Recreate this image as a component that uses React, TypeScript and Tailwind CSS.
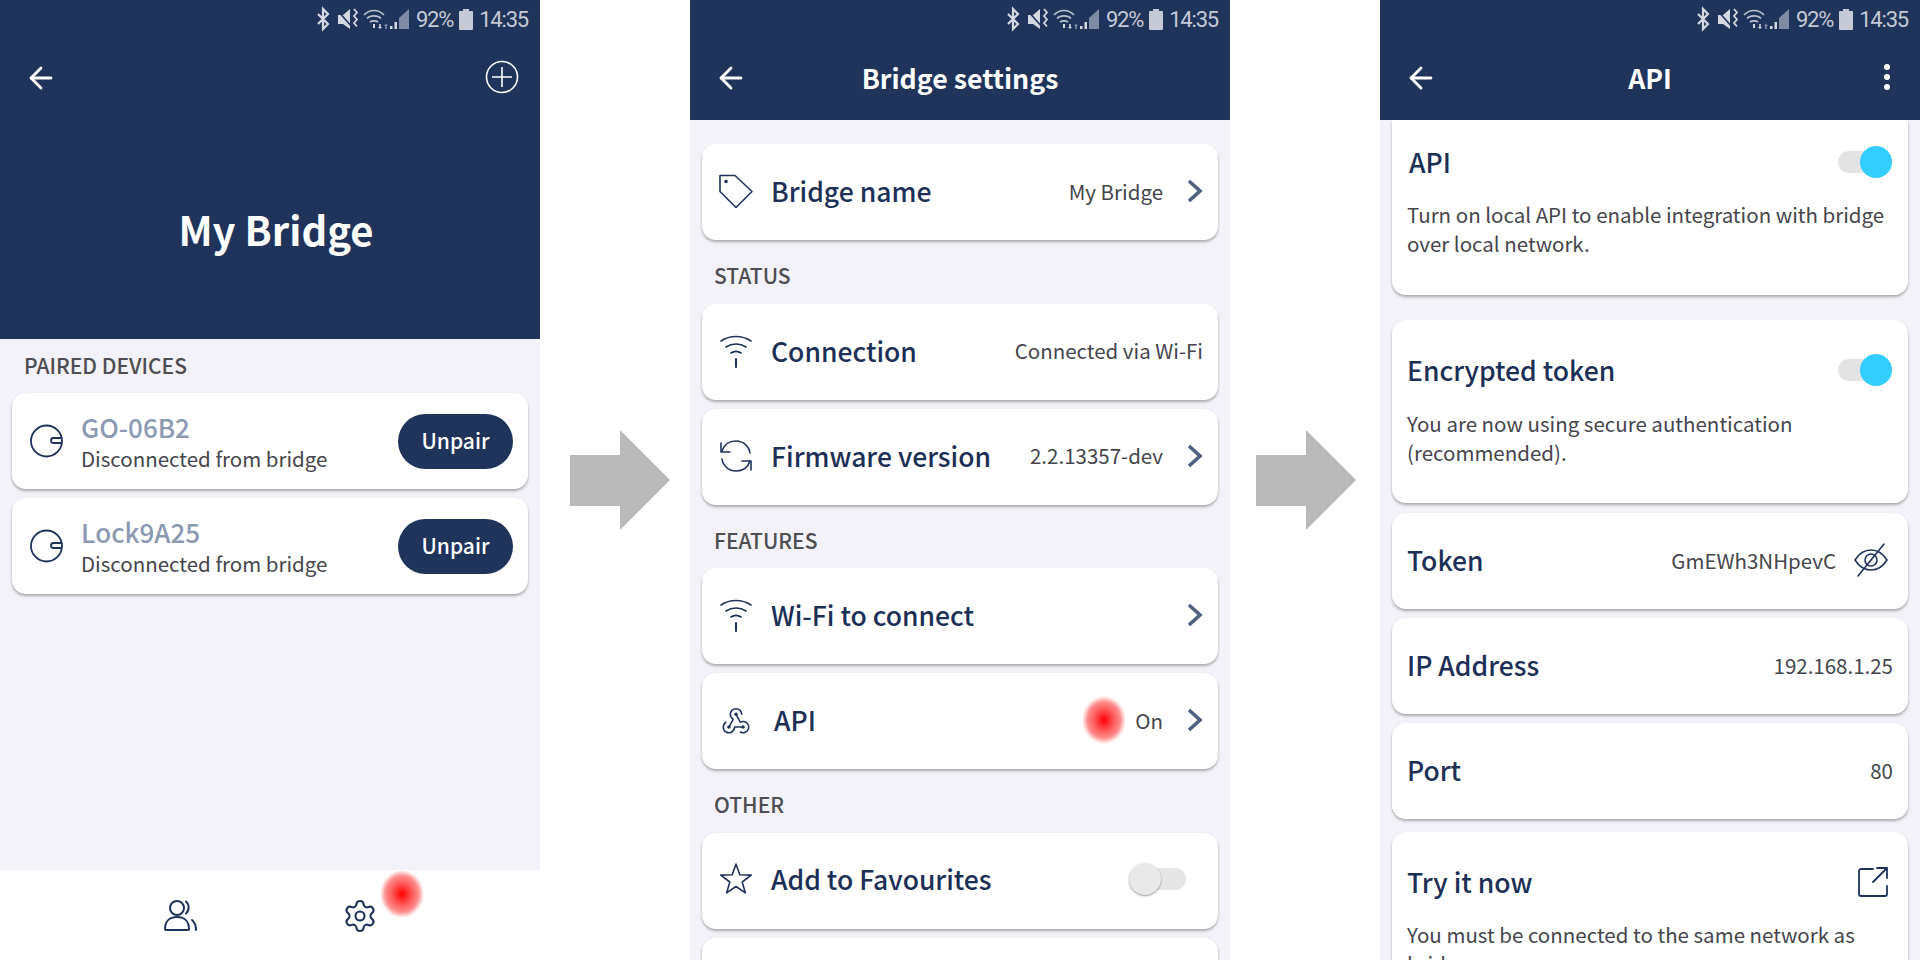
import { ArrowLeft, Settings } from 'lucide-react';

const FONT = "font-['Noto_Sans_CJK_JP','Noto_Sans',sans-serif]";
const NAVY = '#1f325a';

function StatusBar() {
  return (
    <div className="h-[38px] mb-[2px] shrink-0 flex items-center justify-end pr-3 gap-[5px] font-['Roboto',sans-serif] text-[22px] tracking-[-1.200px] text-[#c6cad6]">
      <svg width="94" height="26" viewBox="0 0 94 26" fill="none">
        {/* bluetooth */}
        <path d="M1 8l10 10-5 5V3l5 5L1 18" stroke="#d5d8e1" strokeWidth="2.200" />
        {/* muted speaker + vibrate */}
        <path d="M21 9h5l7-6v20l-7-5h-5z" fill="#d5d8e1" />
        <path d="M20 4l16 18" stroke="#20335b" strokeWidth="1.600" />
        <path d="M37 3l3 3.500-3 3.500 3 3.500-3 3.500 3 3.500" stroke="#d5d8e1" strokeWidth="1.800" />
        {/* wifi */}
        <path d="M47 9c5.500-6 14.500-6 20 0M50 12.500c3.500-3.500 10.500-3.500 14 0M53 16c2-1.500 6-1.500 8 0" stroke="#bcc1cf" strokeWidth="1.700" />
        <path d="M56 18h2v4h-2z" fill="#d5d8e1" />
        <path d="M61 21l2 2 2-2h-1.200v-3h-1.600v3z" fill="#d5d8e1" />
        <path d="M67 20l2-2.500 2 2.500h-1.200v3h-1.600v-3z" fill="#7f8ba5" />
        {/* signal */}
        <path d="M73 23h2.500v-3H73zM77.500 23H80v-7h-2.500z" fill="#d5d8e1" />
        <path d="M82 23V12l10-9v20z" fill="#7f8ba5" />
      </svg>
      <span>92%</span>
      <svg width="14" height="23" viewBox="0 0 14 23" className="mx-[1px]">
        <path d="M4 1h6v2h3a1 1 0 0 1 1 1v17a1 1 0 0 1-1 1H1a1 1 0 0 1-1-1V4a1 1 0 0 1 1-1h3z" fill="#c6cad6" />
      </svg>
      <span>14:35</span>
    </div>
  );
}

function NavBar({ title, right }: { title?: string; right?: React.ReactNode }) {
  return (
    <div className="relative h-[74px] shrink-0 flex items-center justify-center">
      <ArrowLeft size={34} strokeWidth={2} className="absolute left-[24px] top-[21px] text-white" />
      {title && <div className="mt-[2px] text-[26.700px] font-bold text-white leading-none">{title}</div>}
      {right}
    </div>
  );
}

function Card({ children, className = '' }: { children?: React.ReactNode; className?: string }) {
  return (
    <div className={`bg-white rounded-[14px] shadow-[0_2px_3px_rgba(0,0,0,0.3)] ${className}`}>{children}</div>
  );
}

function SectionLabel({ text }: { text: string }) {
  return <div className="h-[26px] mt-[22px] mb-[15.500px] pl-[12px] text-[21px] leading-[26px] font-medium text-[#4d4d52]">{text}</div>;
}

function Icon({ children }: { children: React.ReactNode }) {
  return (
    <svg width="34" height="34" viewBox="0 0 34 34" fill="none" stroke={NAVY} strokeWidth="1.600" strokeLinecap="round" strokeLinejoin="round">
      {children}
    </svg>
  );
}

function WifiIcon() {
  return (
    <Icon>
      <path d="M2 7c9-6 21-6 30 0" />
      <path d="M7 13c6-4 14-4 20 0" />
      <path d="M12 19c3-2 7-2 10 0" />
      <path d="M17 25v8" strokeWidth="2" />
    </Icon>
  );
}

function SyncIcon() {
  return (
    <Icon>
      <path d="M3 12C5 6 10 2 17 2c7 0 13 5 14 12" />
      <path d="M31 22c-2 6-7 10-14 10-7 0-13-5-14-12" />
      <path d="M2 4v9h9" />
      <path d="M32 31v-9h-9" />
    </Icon>
  );
}

function TagIcon() {
  return (
    <Icon>
      <path d="M1 1.500H16L33 17.500 17 33.500 1 17.500z" />
      <circle cx="7" cy="7.500" r="1" fill={NAVY} />
    </Icon>
  );
}

function WebhookIcon() {
  return (
    <svg width="36" height="36" viewBox="0 0 24 24" fill="none" stroke={NAVY} strokeWidth="1.100" strokeLinecap="round" strokeLinejoin="round">
      <path d="M4.876 13.610a4 4 0 1 0 6.124 3.390h6" />
      <path d="M15.066 20.502a4 4 0 1 0 1.934-7.502c-.706 0-1.424.179-2 .500l-3-5.500" />
      <path d="M16 8a4 4 0 1 0-8 0c0 1.506.770 2.818 2 3.500l-3 5.500" />
      <circle cx="12" cy="8" r=".700" fill={NAVY} />
      <circle cx="7" cy="17" r=".700" fill={NAVY} />
      <circle cx="17" cy="17" r=".700" fill={NAVY} />
    </svg>
  );
}

function StarIcon() {
  return (
    <Icon>
      <polygon points="17,2 20.800,12.700 32.200,13.100 23.200,20 26.400,30.900 17,24.500 7.600,30.900 10.800,20 1.800,13.100 13.200,12.700" />
    </Icon>
  );
}

function EyeOffIcon() {
  return (
    <Icon>
      <path d="M1 17C6 9 11 7 17 7s11 2 16 10c-5 8-10 10-16 10S6 25 1 17z" />
      <circle cx="17" cy="17" r="6" />
      <path d="M30 1L4 33" />
    </Icon>
  );
}

function DeviceIcon() {
  return (
    <svg width="33" height="34" viewBox="0 0 33 34" fill="none" stroke={NAVY} strokeWidth="1.800">
      <circle cx="16.500" cy="17" r="15.500" />
      <path d="M32 14h-8.500a2.500 2.500 0 0 0 0 5H32" />
    </svg>
  );
}

function UsersIcon() {
  return (
    <svg width="34" height="34" viewBox="0 0 34 34" fill="none" stroke={NAVY} strokeWidth="2" strokeLinecap="round">
      <circle cx="14" cy="9" r="7" />
      <path d="M23 2.500c3.500 3 3.500 9 0 12" />
      <path d="M2 30c0-7 4-12 12-12s12 5 12 12c0 1-1 1-2 1H4c-1 0-2 0-2-1z" />
      <path d="M29 21c3 2.500 4 6 4 10" />
    </svg>
  );
}

function ExternalIcon() {
  return (
    <svg width="30" height="30" viewBox="0 0 30 30" fill="none" stroke={NAVY} strokeWidth="1.800" strokeLinecap="round" strokeLinejoin="round">
      <path d="M15 2H3a2 2 0 0 0-2 2v23a2 2 0 0 0 2 2h24a2 2 0 0 0 2-2V19" />
      <path d="M15 15L29 1M19 1h10v10" />
    </svg>
  );
}

function Chevron() {
  return (
    <svg width="17" height="24" viewBox="0 0 17 24" fill="none" stroke="#4e5f80" strokeWidth="3.600" className="ml-[23px]">
      <path d="M3 2l11 10L3 22" />
    </svg>
  );
}

function Row({ icon, label, value, chevron, labelClass = 'ml-[18px]' }: { icon: React.ReactNode; label: string; value?: string; chevron?: boolean; labelClass?: string }) {
  return (
    <Card className="h-24 pb-[2px] flex items-center pl-[17px] pr-[15px]">
      <div className="w-[34px] h-[34px] flex items-center justify-center shrink-0">{icon}</div>
      <div className={`text-[26.500px] font-medium text-[#1c2f56] ${labelClass}`}>{label}</div>
      <div className="ml-auto flex items-center">
        {value && <span className="text-[20.500px] text-[#45454c]">{value}</span>}
        {chevron && <Chevron />}
      </div>
    </Card>
  );
}

function DeviceCard({ name }: { name: string }) {
  return (
    <Card className="h-24 flex items-center pl-[18px] pr-[15px]">
      <DeviceIcon />
      <div className="ml-[18px]">
        <div className="text-[26px] leading-[34px] font-medium text-[#8c99b3]">{name}</div>
        <div className="text-[20.500px] leading-[28px] text-[#45454c]">Disconnected from bridge</div>
      </div>
      <div className="ml-auto w-[115px] h-[55px] rounded-full bg-[#20335b] text-white text-[21px] font-medium flex items-center justify-center">Unpair</div>
    </Card>
  );
}

function Toggle({ on }: { on?: boolean }) {
  if (on) {
    return (
      <div className="relative w-[54px] h-[22px] rounded-full bg-[#e3e3e3] mr-[1px]">
        <div className="absolute -top-[5px] right-0 w-[32px] h-[32px] rounded-full bg-[#33ccff]" />
      </div>
    );
  }
  return (
    <div className="relative w-[57px] h-[22px] rounded-full bg-[#e6e6e6]">
      <div className="absolute -top-[5px] left-0 w-[32px] h-[32px] rounded-full bg-[#e9e9e9] shadow-[0_1px_2px_rgba(0,0,0,0.4)]" />
    </div>
  );
}

function Arrow({ className }: { className: string }) {
  return (
    <div className={`w-[150px] shrink-0 flex items-center ${className}`}>
      <svg width="100" height="100" viewBox="0 0 100 100">
        <path d="M0 25h50V0l50 50-50 50V76H0z" fill="#b9b9b9" />
      </svg>
    </div>
  );
}

function Hotspot({ className }: { className: string }) {
  return (
    <div className={`absolute w-[44px] h-[48px] bg-[radial-gradient(closest-side,#ff0000_0%,rgba(255,0,0,0.65)_45%,rgba(255,0,0,0.45)_75%,rgba(255,0,0,0)_100%)] ${className}`} />
  );
}

export default function App() {
  return (
    <div className={`relative w-[1920px] h-[960px] overflow-hidden bg-white flex ${FONT}`}>
      {/* Paired devices */}
      <div className="w-[540px] shrink-0 flex flex-col bg-[#f2f2f8]">
        <div className="h-[339px] shrink-0 bg-[#20335b] flex flex-col">
          <StatusBar />
          <NavBar
            right={
              <svg width="34" height="34" viewBox="0 0 34 34" fill="none" stroke="white" strokeWidth="1.600" className="absolute right-[21px]">
                <circle cx="17" cy="17" r="15.500" />
                <path d="M17 7v20M7 17h20" />
              </svg>
            }
          />
          <div className="flex-1 flex items-center justify-center pt-1 pl-[12px] text-[40px] font-bold text-white">My Bridge</div>
        </div>
        <div className="flex-1 px-3">
          <div className="h-[26px] mt-[13px] mb-[15px] pl-[12px] text-[21px] leading-[26px] font-medium text-[#4d4d52]">PAIRED DEVICES</div>
          <div className="flex flex-col gap-[9px]">
            <DeviceCard name="GO-06B2" />
            <DeviceCard name="Lock9A25" />
          </div>
        </div>
        <div className="h-[90px] shrink-0 bg-white flex justify-center items-center pt-[2px]">
          <div className="w-[180px] flex justify-center"><UsersIcon /></div>
          <div className="w-[180px] flex justify-center"><Settings size={36} strokeWidth={1.4} className="text-[#1f325a]" /></div>
        </div>
      </div>

      <Arrow className="pl-[30px]" />

      {/* Bridge settings */}
      <div className="w-[540px] shrink-0 flex flex-col bg-[#f2f2f8]">
        <div className="h-[120px] shrink-0 bg-[#20335b] flex flex-col">
          <StatusBar />
          <NavBar title="Bridge settings" />
        </div>
        <div className="flex-1 px-3 pt-[24px]">
          <Row icon={<TagIcon />} label="Bridge name" value="My Bridge" chevron />
          <SectionLabel text="STATUS" />
          <div className="flex flex-col gap-[9px]">
            <Row icon={<WifiIcon />} label="Connection" value="Connected via Wi-Fi" />
            <Row icon={<SyncIcon />} label="Firmware version" value="2.2.13357-dev" chevron />
          </div>
          <SectionLabel text="FEATURES" />
          <div className="flex flex-col gap-[9px]">
            <Row icon={<WifiIcon />} label="Wi-Fi to connect" chevron />
            <Row icon={<WebhookIcon />} label="API" value="On" chevron labelClass="ml-[21px]" />
          </div>
          <SectionLabel text="OTHER" />
          <div className="flex flex-col gap-[9px]">
            <Card className="h-24 pb-[4px] flex items-center pl-[17px] pr-[32px]">
              <StarIcon />
              <div className="ml-[18px] text-[26.500px] font-medium text-[#1c2f56]">Add to Favourites</div>
              <div className="ml-auto"><Toggle /></div>
            </Card>
            <Card className="h-24" />
          </div>
        </div>
      </div>

      <Arrow className="pl-[26px]" />

      {/* API */}
      <div className="w-[540px] shrink-0 flex flex-col bg-[#f2f2f8]">
        <div className="relative z-10 h-[120px] shrink-0 bg-[#20335b] flex flex-col">
          <StatusBar />
          <NavBar
            title="API"
            right={
              <div className="absolute right-[30px] flex flex-col gap-[4px]">
                <div className="w-[6px] h-[6px] rounded-full bg-white" />
                <div className="w-[6px] h-[6px] rounded-full bg-white" />
                <div className="w-[6px] h-[6px] rounded-full bg-white" />
              </div>
            }
          />
        </div>
        <div className="flex-1 px-3 min-h-0">
          <Card className="h-[175px] rounded-t-none px-[15px] pt-[24px]">
            <div className="flex items-center justify-between h-9">
              <div className="text-[26.500px] font-medium text-[#1c2f56] pl-[2px]">API</div>
              <Toggle on />
            </div>
            <div className="mt-[20px] text-[20.500px] leading-[29px] text-[#45454c]">Turn on local API to enable integration with bridge over local network.</div>
          </Card>
          <Card className="mt-[25px] h-[183px] px-[15px] pt-[32px]">
            <div className="flex items-center justify-between h-9">
              <div className="text-[26.500px] font-medium text-[#1c2f56]">Encrypted token</div>
              <Toggle on />
            </div>
            <div className="mt-[21px] text-[20.500px] leading-[29px] text-[#45454c]">You are now using secure authentication (recommended).</div>
          </Card>
          <div className="mt-[10px] flex flex-col gap-[9px]">
            <Card className="h-24 pb-[2px] flex items-center pl-[15px] pr-[20px]">
              <div className="text-[26.500px] font-medium text-[#1c2f56]">Token</div>
              <span className="ml-auto text-[20.500px] text-[#45454c]">GmEWh3NHpevC</span>
              <div className="ml-[18px]"><EyeOffIcon /></div>
            </Card>
            <Card className="h-24 pb-[2px] flex items-center justify-between px-[15px]">
              <div className="text-[26.500px] font-medium text-[#1c2f56]">IP Address</div>
              <span className="text-[20.500px] text-[#45454c]">192.168.1.25</span>
            </Card>
            <Card className="h-24 pb-[2px] flex items-center justify-between px-[15px]">
              <div className="text-[26.500px] font-medium text-[#1c2f56]">Port</div>
              <span className="text-[20.500px] text-[#45454c]">80</span>
            </Card>
          </div>
          <Card className="mt-[13px] h-[200px] pl-[15px] pr-[20px] pt-[32px]">
            <div className="flex items-center justify-between h-9">
              <div className="text-[26.500px] font-medium text-[#1c2f56]">Try it now</div>
              <ExternalIcon />
            </div>
            <div className="mt-[20px] text-[20.500px] leading-[29px] text-[#45454c]">You must be connected to the same network as bridge.</div>
          </Card>
        </div>
      </div>

      <Hotspot className="left-[380px] top-[870px]" />
      <Hotspot className="left-[1082px] top-[696px]" />
    </div>
  );
}
